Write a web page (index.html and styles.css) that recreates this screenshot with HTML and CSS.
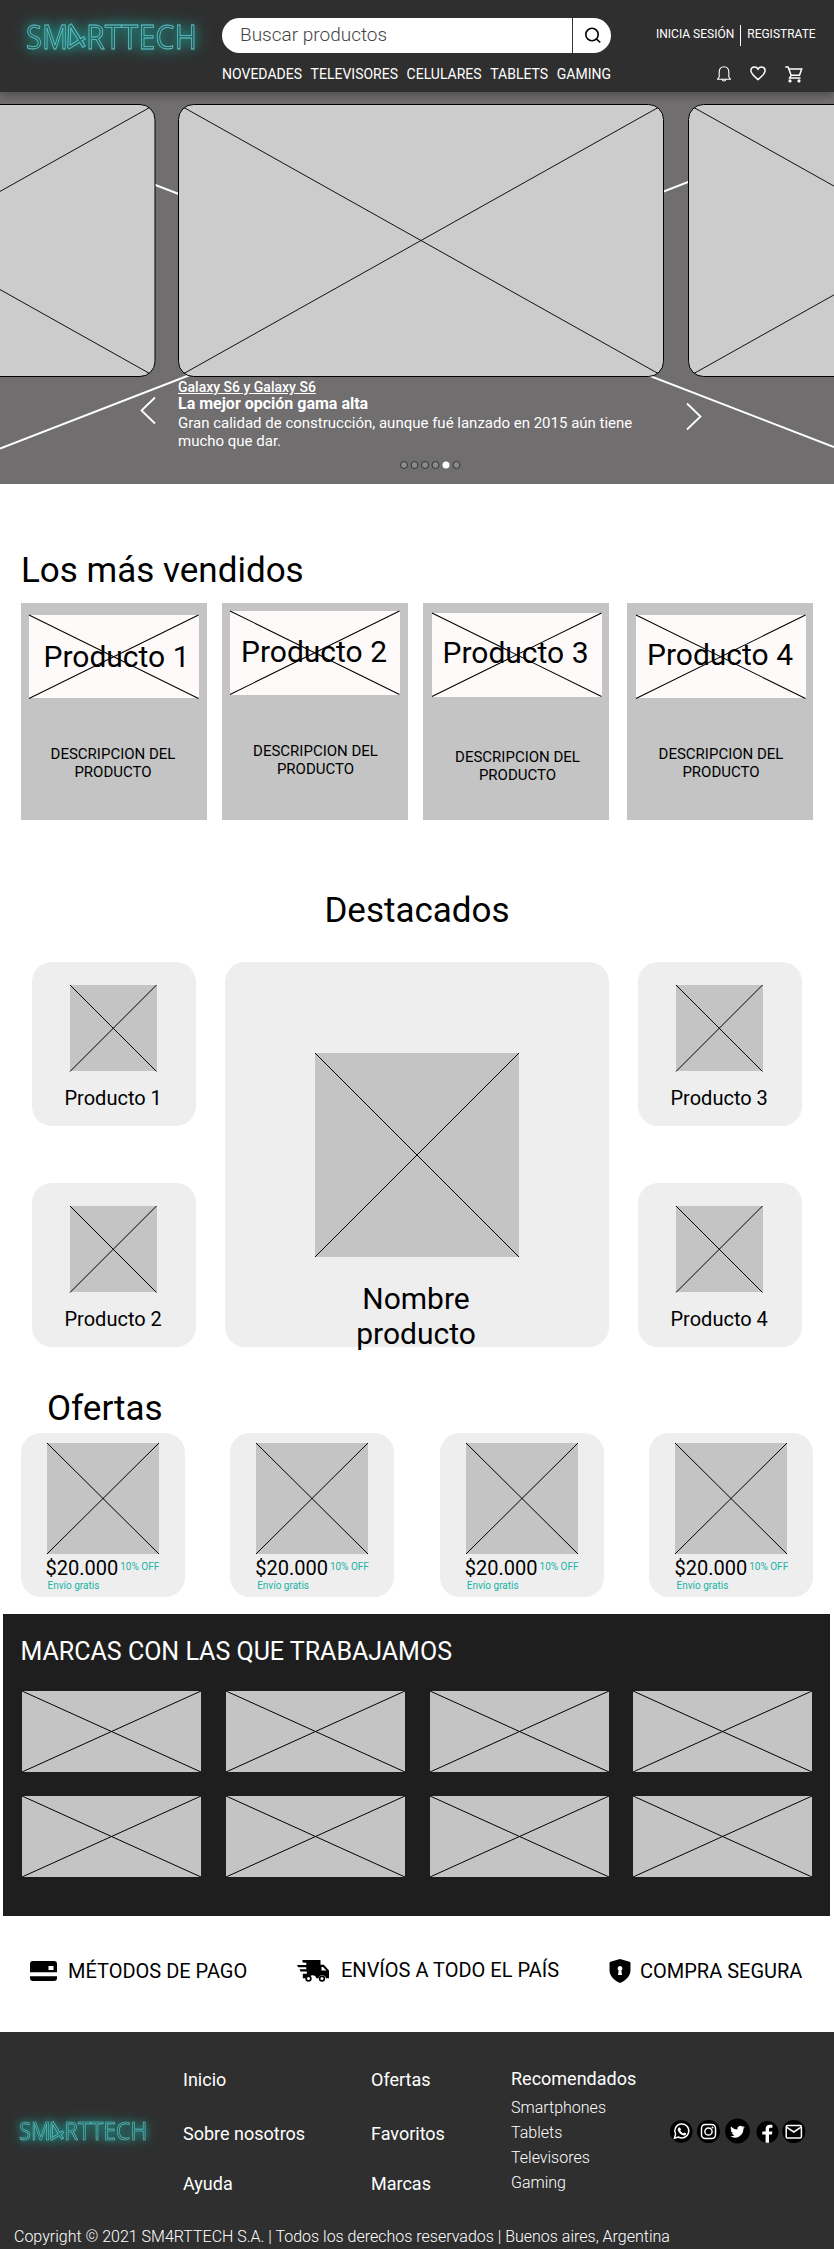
FILE: index.html
```html
<!DOCTYPE html>
<html lang="es">
<head>
<meta charset="utf-8">
<title>SM4RTTECH</title>
<link rel="stylesheet" href="styles.css">
</head>
<body>
<header class="header">
  <svg class="logo" width="222" height="92" viewBox="0 0 222 92">
    <g class="neon">
      <text x="26" y="49" textLength="42" lengthAdjust="spacingAndGlyphs">SM</text>
      <text transform="translate(71.500 54.500) rotate(-32) scale(1.100)" x="0" y="0">4</text>
      <text x="86" y="49" textLength="111" lengthAdjust="spacingAndGlyphs">RTTECH</text>
    </g>
  </svg>
  <div class="header-main">
    <div class="search">
      <span class="search-text">Buscar productos</span>
      <span class="search-btn"><svg width="18" height="18" viewBox="0 0 18 18"><circle cx="8" cy="7.500" r="6.200"/><path d="M12.300 11.800l4 3.700"/></svg></span>
    </div>
    <nav class="nav"><a>NOVEDADES</a><a>TELEVISORES</a><a>CELULARES</a><a>TABLETS</a><a>GAMING</a></nav>
  </div>
  <div class="account">
    <div class="session"><a>INICIA SESIÓN</a><i class="bar"></i><a>REGISTRATE</a></div>
    <div class="tools">
      <svg width="14" height="16" viewBox="0 0 14 16"><path class="thin" d="M.7 13.200h12.600l-1.500-2.400V6c0-3-2-5.300-4.800-5.300S2.200 3 2.200 6v4.800zM5.200 13.500c.3 2 3.300 2 3.600 0"/></svg>
      <svg width="16" height="16" viewBox="0 0 16 16"><path d="M8 13.600C4 10.300.9 7.700.9 4.800.9 2.600 2.500 1 4.500 1 6 1 7.300 1.800 8 3.100 8.700 1.800 10 1 11.500 1c2 0 3.600 1.600 3.600 3.800 0 2.900-3.100 5.500-7.100 8.800z"/></svg>
      <svg width="18" height="17" viewBox="0 0 18 17"><path d="M.3 1.100h2.800l3 8.200h8.400l2.200-6.300H3.900M6.100 9.300l-1.500 2.600h10.900"/><circle class="solid" cx="5" cy="14.900" r="1.600"/><circle class="solid" cx="14" cy="14.900" r="1.600"/></svg>
    </div>
  </div>
</header>

<section class="hero">
  <svg class="slides" width="834" height="392" viewBox="0 92 834 392">
    <defs>
      <clipPath id="left"><rect x="-330" y="104.500" width="485" height="272" rx="15"/></clipPath>
      <clipPath id="mid"><rect x="178.500" y="104.500" width="485" height="272" rx="15"/></clipPath>
      <clipPath id="right"><rect x="688.500" y="104.500" width="485" height="272" rx="15"/></clipPath>
    </defs>
    <path class="rays" d="M0 125L834 447M0 448.500L834 125.500"/>
    <g class="slide"><rect x="-330" y="104.500" width="485" height="272" rx="15"/><path clip-path="url(#left)" d="M-330 104.500l485 272M-330 376.500l485-272"/></g>
    <g class="slide"><rect x="178.500" y="104.500" width="485" height="272" rx="15"/><path clip-path="url(#mid)" d="M178.500 104.500l485 272M178.500 376.500l485-272"/></g>
    <g class="slide"><rect x="688.500" y="104.500" width="485" height="272" rx="15"/><path clip-path="url(#right)" d="M688.500 104.500l485 272M688.500 376.500l485-272"/></g>
    <path class="arrow" d="M155 397.500L141.500 410.500l13.500 13M687 403.500l13.500 13-13.500 13"/>
    <g class="dots"><circle cx="404" cy="465" r="3.500"/><circle cx="414.500" cy="465" r="3.500"/><circle cx="425" cy="465" r="3.500"/><circle cx="435.500" cy="465" r="3.500"/><circle class="on" cx="446" cy="465" r="3.500"/><circle cx="456.500" cy="465" r="3.500"/></g>
  </svg>
  <div class="caption">
    <p class="model">Galaxy S6 y Galaxy S6</p>
    <p class="claim">La mejor opción gama alta</p>
    <p class="detail">Gran calidad de construcción, aunque fué lanzado en 2015 aún tiene<br>mucho que dar.</p>
  </div>
</section>

<section class="best">
  <h2>Los más vendidos</h2>
  <div class="best-row">
    <article class="card c1"><div class="pic"><svg viewBox="0 0 100 100" preserveAspectRatio="none"><path d="M0 0L100 100M100 0L0 100"/></svg><h3>Producto 1</h3></div><p>DESCRIPCION DEL<br>PRODUCTO</p></article>
    <article class="card c2"><div class="pic"><svg viewBox="0 0 100 100" preserveAspectRatio="none"><path d="M0 0L100 100M100 0L0 100"/></svg><h3>Producto 2</h3></div><p>DESCRIPCION DEL<br>PRODUCTO</p></article>
    <article class="card c3"><div class="pic"><svg viewBox="0 0 100 100" preserveAspectRatio="none"><path d="M0 0L100 100M100 0L0 100"/></svg><h3>Producto 3</h3></div><p>DESCRIPCION DEL<br>PRODUCTO</p></article>
    <article class="card c4"><div class="pic"><svg viewBox="0 0 100 100" preserveAspectRatio="none"><path d="M0 0L100 100M100 0L0 100"/></svg><h3>Producto 4</h3></div><p>DESCRIPCION DEL<br>PRODUCTO</p></article>
  </div>
</section>

<section class="featured">
  <h2>Destacados</h2>
  <div class="featured-grid">
    <div class="col">
      <article class="tile"><svg viewBox="0 0 100 100" preserveAspectRatio="none"><path d="M0 0L100 100M100 0L0 100"/></svg><p>Producto 1</p></article>
      <article class="tile"><svg viewBox="0 0 100 100" preserveAspectRatio="none"><path d="M0 0L100 100M100 0L0 100"/></svg><p>Producto 2</p></article>
    </div>
    <article class="big"><svg viewBox="0 0 100 100" preserveAspectRatio="none"><path d="M0 0L100 100M100 0L0 100"/></svg><p>Nombre<br>producto</p></article>
    <div class="col">
      <article class="tile"><svg viewBox="0 0 100 100" preserveAspectRatio="none"><path d="M0 0L100 100M100 0L0 100"/></svg><p>Producto 3</p></article>
      <article class="tile"><svg viewBox="0 0 100 100" preserveAspectRatio="none"><path d="M0 0L100 100M100 0L0 100"/></svg><p>Producto 4</p></article>
    </div>
  </div>
</section>

<section class="offers">
  <h2>Ofertas</h2>
  <div class="offers-row">
    <article class="offer"><svg viewBox="0 0 100 100" preserveAspectRatio="none"><path d="M0 0L100 100M100 0L0 100"/></svg><p class="price">$20.000<span>10% OFF</span></p><p class="ship">Envío gratis</p></article>
    <article class="offer"><svg viewBox="0 0 100 100" preserveAspectRatio="none"><path d="M0 0L100 100M100 0L0 100"/></svg><p class="price">$20.000<span>10% OFF</span></p><p class="ship">Envío gratis</p></article>
    <article class="offer"><svg viewBox="0 0 100 100" preserveAspectRatio="none"><path d="M0 0L100 100M100 0L0 100"/></svg><p class="price">$20.000<span>10% OFF</span></p><p class="ship">Envío gratis</p></article>
    <article class="offer"><svg viewBox="0 0 100 100" preserveAspectRatio="none"><path d="M0 0L100 100M100 0L0 100"/></svg><p class="price">$20.000<span>10% OFF</span></p><p class="ship">Envío gratis</p></article>
  </div>
</section>

<section class="brands">
  <h2>MARCAS CON LAS QUE TRABAJAMOS</h2>
  <div class="brand-grid">
    <svg viewBox="0 0 100 100" preserveAspectRatio="none"><path d="M0 0L100 100M100 0L0 100"/></svg>
    <svg viewBox="0 0 100 100" preserveAspectRatio="none"><path d="M0 0L100 100M100 0L0 100"/></svg>
    <svg viewBox="0 0 100 100" preserveAspectRatio="none"><path d="M0 0L100 100M100 0L0 100"/></svg>
    <svg viewBox="0 0 100 100" preserveAspectRatio="none"><path d="M0 0L100 100M100 0L0 100"/></svg>
    <svg viewBox="0 0 100 100" preserveAspectRatio="none"><path d="M0 0L100 100M100 0L0 100"/></svg>
    <svg viewBox="0 0 100 100" preserveAspectRatio="none"><path d="M0 0L100 100M100 0L0 100"/></svg>
    <svg viewBox="0 0 100 100" preserveAspectRatio="none"><path d="M0 0L100 100M100 0L0 100"/></svg>
    <svg viewBox="0 0 100 100" preserveAspectRatio="none"><path d="M0 0L100 100M100 0L0 100"/></svg>
  </div>
</section>

<section class="perks">
  <div class="perk pay"><svg width="27" height="20" viewBox="0 0 27 20"><path fill-rule="evenodd" d="M3 0h21a3 3 0 0 1 3 3v8.200H0V3a3 3 0 0 1 3-3zM18.500 5v4h5V5zM0 15.200h27V17a3 3 0 0 1-3 3H3a3 3 0 0 1-3-3z"/></svg><span>MÉTODOS DE PAGO</span></div>
  <div class="perk send"><svg width="32" height="22" viewBox="0 0 32 22"><path fill-rule="evenodd" d="M5.500 2.500V0h18v4.800h3.300l5.200 5.700v7.700h-3a3.900 3.900 0 0 0-7.600 0h-2a3.900 3.900 0 0 0-7.600 0H5.800v-4.500h4v-2.200H3.500L2.500 9.300h6.800V7.200H1.200L0 5h9.300V2.800zM24.500 7v3.500h5L26 7z"/><circle cx="11.500" cy="18.600" r="3.200"/><circle cx="25" cy="18.600" r="3.200"/><circle class="hole" cx="11.500" cy="18.600" r="1.500"/><circle class="hole" cx="25" cy="18.600" r="1.500"/></svg><span>ENVÍOS A TODO EL PAÍS</span></div>
  <div class="perk safe"><svg width="22" height="24" viewBox="0 0 22 24"><path d="M11 0l9.500 2.700c.7.200 1 .5 1 1.100v7.200c0 6-4.500 10.500-10.500 13C5 21.500.5 17 .5 11V3.800c0-.6.300-.9 1-1.100z"/><path class="hole" d="M11 7a2.500 2.500 0 0 0-1.400 4.500L9 16h4l-.6-4.500A2.500 2.500 0 0 0 11 7z"/></svg><span>COMPRA SEGURA</span></div>
</section>

<footer class="footer">
  <div class="foot-main">
    <svg class="foot-logo" width="183" height="70" viewBox="0 0 183 70">
      <g class="neon" transform="translate(-.5 11.500) scale(.75)">
        <text x="26" y="49" textLength="42" lengthAdjust="spacingAndGlyphs">SM</text>
        <text transform="translate(71.500 54.500) rotate(-32) scale(1.100)" x="0" y="0">4</text>
        <text x="86" y="49" textLength="111" lengthAdjust="spacingAndGlyphs">RTTECH</text>
      </g>
    </svg>
    <ul class="links"><li>Inicio</li><li>Sobre nosotros</li><li>Ayuda</li></ul>
    <ul class="links second"><li>Ofertas</li><li>Favoritos</li><li>Marcas</li></ul>
    <div class="reco"><h4>Recomendados</h4><ul><li>Smartphones</li><li>Tablets</li><li>Televisores</li><li>Gaming</li></ul></div>
    <svg class="social" width="140" height="30" viewBox="668 2116 140 30">
      <circle cx="681.200" cy="2131.500" r="11.300"/>
      <g class="line"><path d="M674.500 2138.200l1.100-4a7 7 0 1 1 2.700 2.800z"/></g>
      <path class="fill" d="M679 2127.600c.8-.5 1.300 0 1.900 1.600.2.600-.7 1.100-.6 1.400.5 1.200 1.500 2.100 2.700 2.600.4.200.9-1 1.400-.8 1.400.6 1.900.9 1.700 1.600-.5 1.700-2.400 1.800-4 1-2.200-1-3.600-2.700-4.200-4.400-.4-1.200.1-2.400 1.100-3z"/>
      <circle cx="708.500" cy="2131.500" r="11.500"/>
      <g class="line"><rect x="701.500" y="2124.500" width="14" height="14" rx="3.800"/><circle cx="708.500" cy="2131.500" r="3.600"/></g><circle class="fill" cx="712.500" cy="2127.500" r="1"/>
      <circle cx="737.500" cy="2131" r="12.500"/>
      <path class="fill" d="M744.800 2127.300c-.5.200-1.100.4-1.700.5.600-.4 1.100-1 1.300-1.700-.6.400-1.200.6-1.900.7a3 3 0 0 0-5.100 2.700c-2.500-.1-4.700-1.300-6.200-3.100a3 3 0 0 0 .9 4c-.5 0-.9-.1-1.300-.4 0 1.500 1 2.700 2.400 3-.4.100-.9.100-1.300 0 .4 1.200 1.500 2.100 2.800 2.100a6 6 0 0 1-4.400 1.200 8.500 8.500 0 0 0 13.100-7.500c.6-.4 1-.9 1.400-1.500z"/>
      <circle cx="767.500" cy="2132" r="11"/>
      <path class="fill" d="M765.600 2142.800v-8.200h-3.300v-3.100h3.300v-2.300c0-3 1.800-4.400 4.300-4.400 1 0 1.900.1 2.500.2v2.700h-1.700c-1.400 0-1.700.7-1.700 1.700v2.100h3.400l-.5 3.100h-2.900v8.200z"/>
      <circle cx="793.800" cy="2131.500" r="11.500"/>
      <g class="line"><rect x="786.200" y="2125.500" width="15.200" height="12.500" rx="1.200"/><path d="M786.500 2127.200l7.300 4.800 7.300-4.800"/></g>
    </svg>
  </div>
  <p class="copy">Copyright © 2021 SM4RTTECH S.A. | Todos los derechos reservados | Buenos aires, Argentina</p>
</footer>
</body>
</html>
```

FILE: styles.css
```css
* { box-sizing: border-box; }
body { margin: 0; width: 834px; background: #fff; color: #000; font-family: Roboto, sans-serif; overflow-x: hidden; }
h2, h3, h4, p, ul { margin: 0; padding: 0; font-weight: 400; }
ul { list-style: none; }
svg { display: block; }

/* crossed placeholder boxes */
svg[preserveAspectRatio] { background: #c4c4c4; overflow: visible; }
svg[preserveAspectRatio] path { fill: none; stroke: #000; stroke-width: 1; vector-effect: non-scaling-stroke; }

.header { position: relative; z-index: 1; display: grid; grid-template-columns: 222px 389px 1fr; height: 92px; background: #2f2f2f; box-shadow: 0 4px 8px rgba(0, 0, 0, .28); }
.neon { font: 33px "Open Sans", sans-serif; fill: rgba(31, 110, 108, .55); stroke: #6cc6cb; stroke-width: .8; filter: drop-shadow(0 0 5px #1c9a90) drop-shadow(0 0 8px rgba(28, 154, 144, .7)); }
.header-main { padding-top: 18px; }
.search { display: flex; width: 389px; height: 35px; border-radius: 18px; background: #fff; }
.search-text { flex: 1; padding-left: 18px; font-size: 19px; font-weight: 300; line-height: 33px; color: #444; }
.search-btn { width: 39px; border-left: 1px solid #333; padding: 9px 0 0 11px; }
.search-btn svg { fill: none; stroke: #000; stroke-width: 1.600; }
.nav { display: flex; justify-content: space-between; padding-top: 12px; font-size: 14px; line-height: 18px; color: #fff; }
.account { color: #fff; }
.session { display: flex; align-items: center; padding: 25px 0 0 45px; font-size: 12px; line-height: 21px; white-space: nowrap; }
.session a { margin-top: -2px; }
.bar { width: 1px; height: 21px; margin: 0 6px 0 6px; background: #fff; }
.tools { display: flex; gap: 19px; padding: 20px 0 0 106px; }
.tools svg { fill: none; stroke: #fff; stroke-width: 1.500; }
.tools .thin { stroke-width: 1.100; }
.tools .solid { fill: #fff; stroke: none; }

.hero { display: grid; height: 391.500px; background: #706e6f; }
.slides, .caption { grid-area: 1 / 1; }
.rays { stroke: #fff; stroke-width: 2; }
.slide { fill: #ccc; stroke: #000; }
.slide path { fill: none; stroke: #111; }
.arrow { fill: none; stroke: #fff; stroke-width: 1.800; }
.dots circle { fill: #8a8a8a; stroke: #333; stroke-width: 1; }
.dots .on { fill: #fff; stroke: #fff; stroke-width: 0; }
.caption { padding: 287px 0 0 178px; color: #fff; }
.model { font-size: 14px; font-weight: 500; line-height: 16px; text-decoration: underline; }
.claim { font-size: 16px; font-weight: 700; line-height: 18px; }
.detail { padding-top: 1px; font-size: 15px; line-height: 18px; white-space: nowrap; }

h2 { font-size: 35px; line-height: 42px; }
.best { padding: 66px 0 0 21px; }
.best-row { display: grid; grid-template-columns: 186px 186px 186px 186px; column-gap: 15px; height: 217.500px; margin-top: 11px; }
.card { background: #c4c4c4; }
.c4 { transform: translateX(3px); }
.pic { display: grid; height: 83.500px; width: 169.500px; margin-left: 8px; }
.pic svg, .pic h3 { grid-area: 1 / 1; min-height: 0; }
.pic svg { width: 100%; height: 100%; background: #fffafa; }
.pic h3 { font-size: 30px; line-height: 35px; white-space: nowrap; }
.card p { font-size: 15px; line-height: 18px; text-align: center; }
.c1 { padding-top: 12px; } .c1 h3 { padding: 24px 0 0 14.500px; } .c1 p { padding: 46.500px 2px 0 0; }
.c2 { padding-top: 8.500px; } .c2 h3 { padding: 22.500px 0 0 11px; } .c2 p { padding: 47.500px 0 0 1px; }
.c3 { padding-top: 10.500px; } .c3 h3 { padding: 22px 0 0 10.500px; } .c3 p { padding: 51px 0 0 3px; }
.c4 { padding-top: 12px; } .c4 h3 { padding: 22px 0 0 11px; } .c4 p { padding: 47px 0 0 2px; }
.c3 .pic, .c4 .pic { margin-left: 9px; }

.featured { padding-top: 70px; }
.featured h2 { text-align: center; }
.featured-grid { display: flex; justify-content: space-between; margin: 30px 32px 0; height: 385px; }
.col { display: flex; flex-direction: column; justify-content: space-between; }
.tile { width: 164px; height: 164px; border-radius: 20px; background: #eee; padding: 22.500px 0 0 38px; }
.tile svg { width: 86.500px; height: 86.500px; }
.tile p { margin: 14.500px 0 0 -5.500px; font-size: 20px; line-height: 24px; }
.big { width: 384.500px; height: 385px; border-radius: 20px; background: #eee; padding-top: 90.500px; text-align: center; }
.big svg { width: 204px; height: 204px; margin-left: 90px; }
.big p { padding: 24.500px 2px 0 0; font-size: 30px; line-height: 35px; }

.offers { padding-top: 41px; }
.offers h2 { padding-left: 47px; }
.offers-row { display: flex; justify-content: space-between; margin: 2.500px 20.500px 0; }
.offer { width: 164px; height: 164px; border-radius: 20px; background: #eee; padding: 10px 0 0 26px; }
.offer svg { width: 112px; height: 111px; }
.price { display: flex; gap: 2px; font-size: 20px; line-height: 24px; padding-top: 2px; margin-left: -1px; white-space: nowrap; }
.price span { font-size: 10px; line-height: 22px; color: #20b2a6; }
.ship { margin-left: 1px; font-size: 10px; line-height: 12px; color: #20b2a6; }

.brands { width: 827px; height: 301.500px; margin: 17.500px 0 0 3px; padding: 23px 17.500px 0; background: #1e1e1e; color: #fff; }
.brands h2 { font-size: 25px; line-height: 30px; }
.brand-grid { display: grid; grid-template-columns: repeat(4, 179px); justify-content: space-between; row-gap: 23.500px; margin: 24px 0 0 1.500px; }
.brand-grid svg { width: 179px; height: 81px; }

.perks { display: flex; height: 116px; font-size: 20px; line-height: 24px; padding: 43px 0 0 30px; white-space: nowrap; }
.perk { display: flex; align-items: flex-start; }
.hole { fill: #fff; }
.pay { width: 267px; } .pay svg { margin: 2px 11px 0 0; }
.send { width: 312px; } .send svg { margin: 1px 12px 0 0; } .send span { margin-top: -1px; }
.safe svg { margin: 0 9px 0 0; }

.footer { height: 217px; background: #2f2f2f; color: #fff; }
.foot-main { display: grid; grid-template-columns: 183px 188px 140px 157px 140px; height: 195px; }
.foot-logo { margin-top: 60px; }
.links { padding-top: 37px; font-size: 18px; line-height: 22px; white-space: nowrap; }
.links li:nth-child(2) { margin-top: 32px; }
.links li:nth-child(3) { margin-top: 28px; }
.reco { padding-top: 36px; }
.reco h4 { font-size: 18px; line-height: 22px; }
.reco ul { padding-top: 5px; font-size: 16px; font-weight: 300; line-height: 25px; }
.social { margin-top: 84px; }
.social .fill { fill: #fff; }
.social .line * { fill: none; stroke: #fff; stroke-width: 1.500; }
.copy { padding: 0 0 0 14px; font-size: 16px; font-weight: 300; line-height: 20px; white-space: nowrap; }
```
